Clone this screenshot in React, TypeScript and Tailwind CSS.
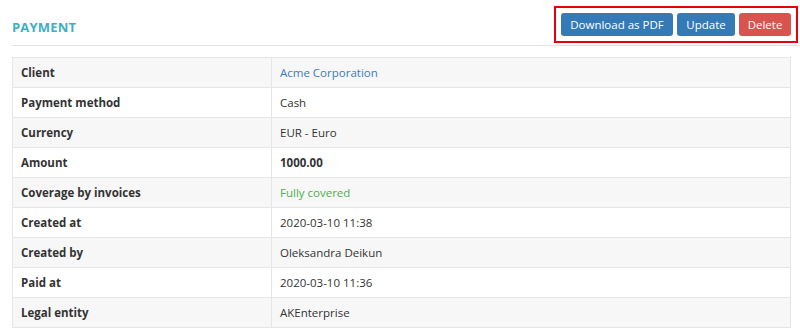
const rows: { label: string; value: string; tone?: "link" | "bold" | "green" }[] = [
  { label: "Client", value: "Acme Corporation", tone: "link" },
  { label: "Payment method", value: "Cash" },
  { label: "Currency", value: "EUR - Euro" },
  { label: "Amount", value: "1000.00", tone: "bold" },
  { label: "Coverage by invoices", value: "Fully covered", tone: "green" },
  { label: "Created at", value: "2020-03-10 11:38" },
  { label: "Created by", value: "Oleksandra Deikun" },
  { label: "Paid at", value: "2020-03-10 11:36" },
  { label: "Legal entity", value: "AKEnterprise" },
];

const toneClass = {
  link: "text-[#3a7bbf]",
  bold: "font-bold text-[#333]",
  green: "text-[#4cae4c]",
};

export default function App() {
  return (
    <div
      className="w-[800px] h-[335px] bg-white pl-3 text-[#333] overflow-hidden"
      style={{ fontFamily: '"Open Sans", "Noto Sans", sans-serif' }}
    >
      {/* Header */}
      <div className="flex items-start justify-between border-b border-[#e3e3e3] pt-[6px] pb-[2px] pr-[2px]">
        <h2 className="mt-[12px] text-[13px] font-bold uppercase tracking-[0.2px] text-[#3bb1c2]">
          Payment
        </h2>
        <div className="flex gap-[4px] border-2 border-[#e8000b] p-[5px]">
          <button className="h-[23px] w-[112px] rounded-[3px] bg-[#337ab7] text-[11.5px] text-white">
            Download as PDF
          </button>
          <button className="h-[23px] w-[58px] rounded-[3px] bg-[#337ab7] text-[11.5px] text-white">
            Update
          </button>
          <button className="h-[23px] w-[52px] rounded-[3px] bg-[#d9534f] text-[11.5px] text-white">
            Delete
          </button>
        </div>
      </div>

      {/* Details table */}
      <table className="mt-[11px] w-[779px] border-collapse border border-[#e6e6e6] text-[11.5px]">
        <tbody>
          {rows.map((row, i) => (
            <tr key={row.label} className={i % 2 === 0 ? "bg-[#f7f7f7]" : "bg-white"}>
              <td className="w-[259px] h-[30px] border border-[#e6e6e6] px-2 py-0 font-bold">
                {row.label}
              </td>
              <td className={`h-[30px] border border-[#e6e6e6] px-2 py-0 ${row.tone ? toneClass[row.tone] : ""}`}>
                {row.value}
              </td>
            </tr>
          ))}
        </tbody>
      </table>
    </div>
  );
}
